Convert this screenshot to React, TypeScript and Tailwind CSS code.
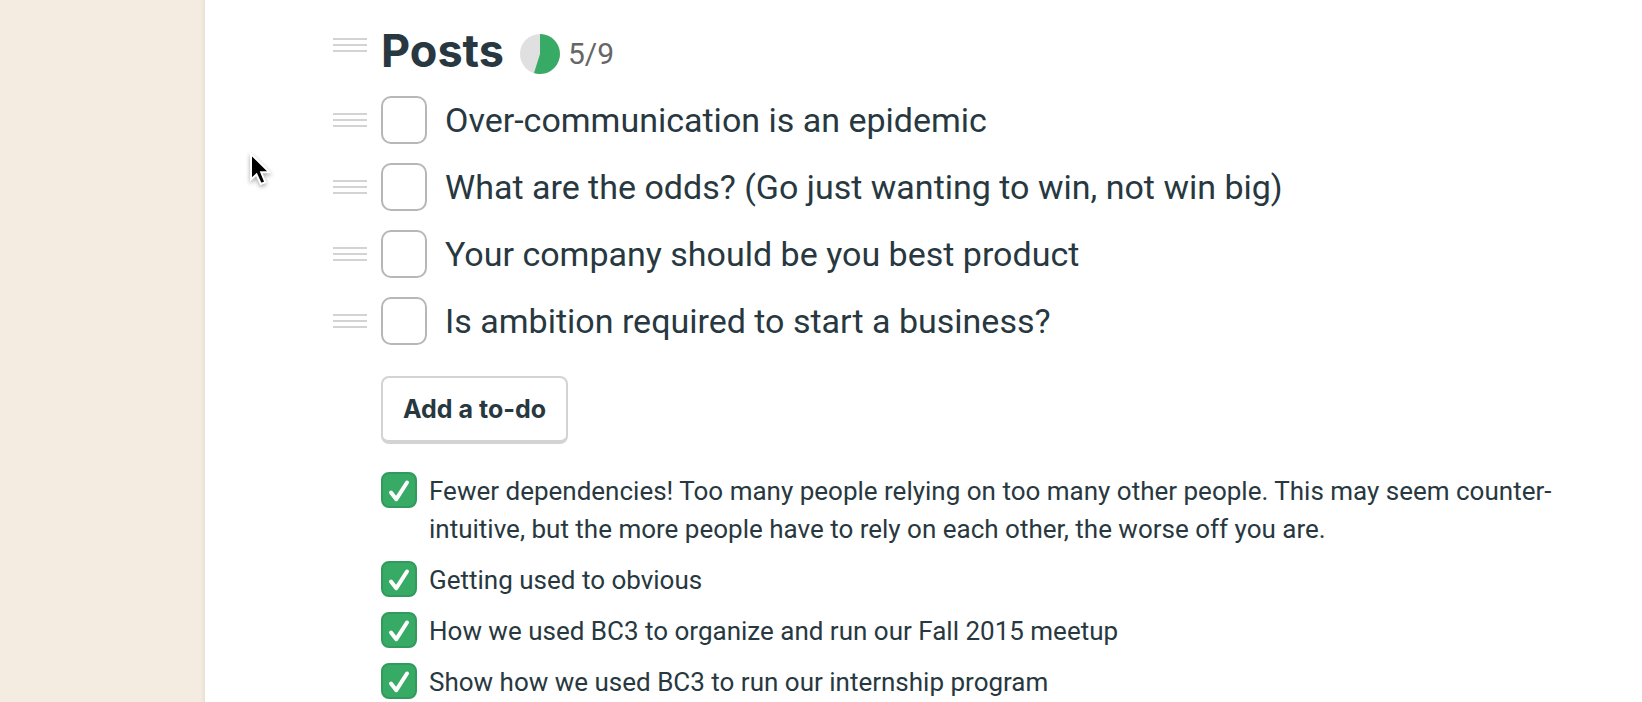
import { useState } from "react";

interface Todo {
    id: string;
    title: string;
}

const openTodos: Todo[] = [
    { id: "epidemic", title: "Over-communication is an epidemic" },
    { id: "odds", title: "What are the odds? (Go just wanting to win, not win big)" },
    { id: "product", title: "Your company should be you best product" },
    { id: "ambition", title: "Is ambition required to start a business?" },
];

const doneTodos: Todo[] = [
    {
        id: "dependencies",
        title: "Fewer dependencies! Too many people relying on too many other people. This may seem counter-intuitive, but the more people have to rely on each other, the worse off you are.",
    },
    { id: "obvious", title: "Getting used to obvious" },
    { id: "meetup", title: "How we used BC3 to organize and run our Fall 2015 meetup" },
    { id: "internship", title: "Show how we used BC3 to run our internship program" },
];

const DragHandle = () => (
    <button type="button" aria-label="Move" className="flex flex-col gap-1 w-[34px] shrink-0 cursor-move">
        <span className="h-0.5 w-full bg-[#d3d3d3]" />
        <span className="h-0.5 w-full bg-[#d3d3d3]" />
        <span className="h-0.5 w-full bg-[#d3d3d3]" />
    </button>
);

const ProgressPie = () => (
    <svg className="size-10 shrink-0" viewBox="0 0 40 40" aria-hidden="true">
        <circle cx="20" cy="20" r="20" fill="#e0e0e0" />
        <path d="M20 0A20 20 0 1 1 14 39.1L20 20Z" fill="#37aa66" />
    </svg>
);

const OpenTodo = ({ todo }: { todo: Todo }) => {
    const [checked, setChecked] = useState(false);
    return (
        <li className="flex items-center">
            <DragHandle />
            <input
                id={todo.id}
                type="checkbox"
                checked={checked}
                onChange={() => setChecked(!checked)}
                className="ml-3.5 h-12 w-[46px] shrink-0 appearance-none rounded-[10px] border-2 border-[#b7b7b7] bg-white checked:bg-[#37aa66]"
            />
            <label htmlFor={todo.id} className="ml-[18px] text-[34px] leading-[48px]">
                {todo.title}
            </label>
        </li>
    );
};

const DoneTodo = ({ todo }: { todo: Todo }) => {
    const [checked, setChecked] = useState(true);
    return (
        <li className="flex items-start gap-3">
            <span className="grid shrink-0">
                <input
                    id={todo.id}
                    type="checkbox"
                    checked={checked}
                    onChange={() => setChecked(!checked)}
                    className="col-start-1 row-start-1 size-9 appearance-none rounded-lg border-2 border-[#b7b7b7] checked:border-[#319a5c] checked:bg-[#37aa66]"
                />
                {checked && (
                    <svg
                        className="col-start-1 row-start-1 size-9 pointer-events-none"
                        viewBox="0 0 36 36"
                        fill="none"
                        stroke="#fff"
                        strokeLinecap="round"
                        strokeLinejoin="round"
                        aria-hidden="true"
                    >
                        <path d="M10 20.5L15.3 27.2L26 10.5" strokeWidth="4" />
                    </svg>
                )}
            </span>
            <label htmlFor={todo.id} className="text-[26px] leading-[38px]">
                {todo.title}
            </label>
        </li>
    );
};

const Pointer = () => (
    <svg
        className="absolute left-[248px] top-[148px] h-[42px] w-7 pointer-events-none drop-shadow-[0_2px_2px_rgba(0,0,0,0.35)]"
        viewBox="0 0 28 42"
        aria-hidden="true"
    >
        <path
            d="M3 6V31.5L8.5 26.5L12.8 36L17.3 34.2L13.2 24.3H21.5Z"
            fill="#000"
            stroke="#fff"
            strokeWidth="2"
        />
    </svg>
);

export default function App() {
    return (
        <div className="relative flex h-screen overflow-hidden bg-[#f4ece1] font-['Roboto',sans-serif] text-[#283840]">
            <div className="w-[205px] shrink-0" />
            <main className="flex-1 min-w-0 bg-white pl-32 pr-20 pt-6 shadow-[0_0_4px_1px_#e3d8c9]">
                <header className="flex items-start">
                    <div className="mt-3.5">
                        <DragHandle />
                    </div>
                    <h1 className="ml-3.5 text-[45px] leading-[54px] font-bold font-['Inter',sans-serif]">Posts</h1>
                    <div className="ml-4 mt-2.5 flex items-center gap-2">
                        <ProgressPie />
                        <span className="text-[30px] leading-10 text-[#666]">5/9</span>
                    </div>
                </header>
                <ul className="mt-[18px] flex flex-col gap-[19px]">
                    {openTodos.map((todo) => (
                        <OpenTodo key={todo.id} todo={todo} />
                    ))}
                </ul>
                <div className="ml-12">
                    <button
                        type="button"
                        className="mt-[31px] h-[68px] rounded-lg border-2 border-b-4 border-[#d3d3d3] bg-white px-5 text-[25px] leading-8 font-bold font-['Inter',sans-serif]"
                    >
                        Add a to-do
                    </button>
                    <ul className="mt-7 flex flex-col gap-[13px]">
                        {doneTodos.map((todo) => (
                            <DoneTodo key={todo.id} todo={todo} />
                        ))}
                    </ul>
                </div>
            </main>
            <Pointer />
        </div>
    );
}
